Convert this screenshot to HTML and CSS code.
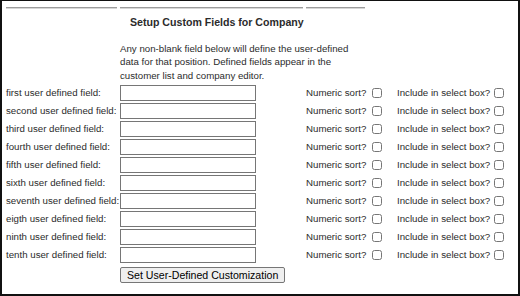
FILE: index.html
```html
<!DOCTYPE html>
<html lang="en">
<head>
    <meta charset="UTF-8">
    <title>Setup Custom Fields for Company</title>
    <link rel="stylesheet" href="styles.css">
</head>
<body>
    <div class="page">
        <form class="fields-grid" onsubmit="return false;">
            <!-- rules across the top -->
            <hr class="rule">
            <hr class="rule">
            <hr class="rule">

            <h2 class="title">Setup Custom Fields for Company</h2>
            <p class="intro">Any non-blank field below will define the user-defined data for that position. Defined fields appear in the customer list and company editor.</p>

            <label class="field-label">first user defined field:</label>
            <input type="text" class="field-input">
            <span class="opt-label">Numeric sort?</span>
            <input type="checkbox" class="opt-check">
            <span class="opt-label">Include in select box?</span>
            <input type="checkbox" class="opt-check">

            <label class="field-label">second user defined field:</label>
            <input type="text" class="field-input">
            <span class="opt-label">Numeric sort?</span>
            <input type="checkbox" class="opt-check">
            <span class="opt-label">Include in select box?</span>
            <input type="checkbox" class="opt-check">

            <label class="field-label">third user defined field:</label>
            <input type="text" class="field-input">
            <span class="opt-label">Numeric sort?</span>
            <input type="checkbox" class="opt-check">
            <span class="opt-label">Include in select box?</span>
            <input type="checkbox" class="opt-check">

            <label class="field-label">fourth user defined field:</label>
            <input type="text" class="field-input">
            <span class="opt-label">Numeric sort?</span>
            <input type="checkbox" class="opt-check">
            <span class="opt-label">Include in select box?</span>
            <input type="checkbox" class="opt-check">

            <label class="field-label">fifth user defined field:</label>
            <input type="text" class="field-input">
            <span class="opt-label">Numeric sort?</span>
            <input type="checkbox" class="opt-check">
            <span class="opt-label">Include in select box?</span>
            <input type="checkbox" class="opt-check">

            <label class="field-label">sixth user defined field:</label>
            <input type="text" class="field-input">
            <span class="opt-label">Numeric sort?</span>
            <input type="checkbox" class="opt-check">
            <span class="opt-label">Include in select box?</span>
            <input type="checkbox" class="opt-check">

            <label class="field-label">seventh user defined field:</label>
            <input type="text" class="field-input">
            <span class="opt-label">Numeric sort?</span>
            <input type="checkbox" class="opt-check">
            <span class="opt-label">Include in select box?</span>
            <input type="checkbox" class="opt-check">

            <label class="field-label">eigth user defined field:</label>
            <input type="text" class="field-input">
            <span class="opt-label">Numeric sort?</span>
            <input type="checkbox" class="opt-check">
            <span class="opt-label">Include in select box?</span>
            <input type="checkbox" class="opt-check">

            <label class="field-label">ninth user defined field:</label>
            <input type="text" class="field-input">
            <span class="opt-label">Numeric sort?</span>
            <input type="checkbox" class="opt-check">
            <span class="opt-label">Include in select box?</span>
            <input type="checkbox" class="opt-check">

            <label class="field-label">tenth user defined field:</label>
            <input type="text" class="field-input">
            <span class="opt-label">Numeric sort?</span>
            <input type="checkbox" class="opt-check">
            <span class="opt-label">Include in select box?</span>
            <input type="checkbox" class="opt-check">

            <div class="actions">
                <button type="submit" class="save-btn">Set User-Defined Customization</button>
            </div>
        </form>
    </div>
</body>
</html>
```

FILE: styles.css
```css
html, body {
    margin: 0;
    padding: 0;
    background: #fff;
}
.page {
    width: 520px;
    height: 296px;
    box-sizing: border-box;
    border-style: solid;
    border-color: #111;
    border-width: 1px 2px 2px 2px;
    padding: 0 0 0 4px;
    font-family: "Liberation Sans", Arial, sans-serif;
    font-size: 9.7px;
    color: #2b2b2b;
    overflow: hidden;
}
.fields-grid {
    display: grid;
    grid-template-columns: 111px 183px 60px 25px 94px 20px;
    column-gap: 3px;
    align-items: center;
    margin: 0;
}
.rule {
    height: 0;
    margin: 6px 0 0 0;
    border: 0;
    border-top: 1px solid #9c9c9c;
    border-bottom: 1px solid #d6d6d6;
    align-self: start;
}
.rule:nth-child(3) {
    width: 59px;
}
.title {
    grid-column: 2 / 6;
    margin: 6px 0 0 10px;
    font-size: 10.6px;
    line-height: 14px;
    font-weight: bold;
    color: #2b2b2b;
}
.intro {
    grid-column: 2 / 6;
    width: 240px;
    margin: 13px 0 3px 0;
    line-height: 13.3px;
}
.field-label {
    grid-column: 1;
    height: 16px;
    line-height: 16px;
    margin-bottom: 2px;
    white-space: nowrap;
}
.field-input {
    width: 136px;
    height: 16px;
    box-sizing: border-box;
    margin: 0 0 2px 0;
    padding: 0 2px;
    border: 1px solid #767676;
    border-radius: 0;
    font-size: 9.7px;
}
.opt-label {
    height: 16px;
    line-height: 16px;
    margin-bottom: 2px;
    white-space: nowrap;
}
.opt-check {
    width: 10px;
    height: 10px;
    margin: 0 0 2px 3px;
}
.opt-label + .opt-check + .opt-label + .opt-check {
    margin-left: 0;
}
.actions {
    grid-column: 2 / 6;
    margin-top: 2px;
}
.save-btn {
    height: 16px;
    padding: 0 6px;
    font-family: "Liberation Sans", Arial, sans-serif;
    font-size: 10.6px;
    line-height: 14px;
    color: #000;
    background: #efefef;
    border: 1px solid #767676;
    border-radius: 2px;
}
```
